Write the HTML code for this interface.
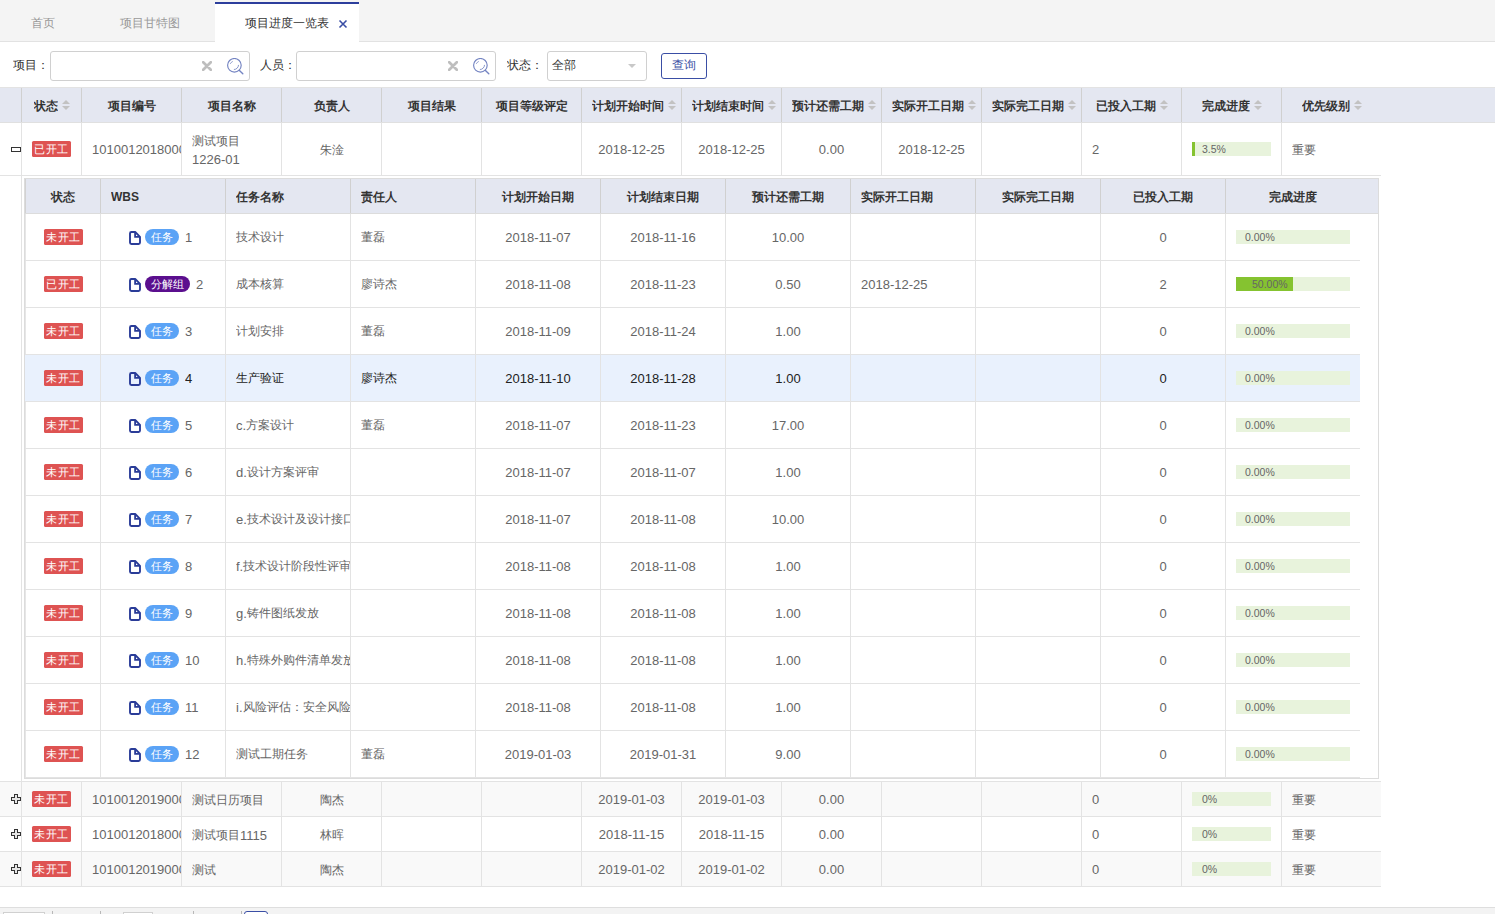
<!DOCTYPE html><html><head><meta charset="utf-8"><style>
*{box-sizing:border-box;margin:0;padding:0}
html,body{width:1495px;height:914px;overflow:hidden;background:#fff}
body{position:relative;font-family:"Liberation Sans",sans-serif;font-size:12px;color:#666}
.a{position:absolute}
.n{font-size:13px;position:relative;top:1px}
.t{position:absolute;white-space:nowrap;overflow:hidden;line-height:14px}
.hd{font-weight:bold;color:#333}
.badge{position:absolute;height:16px;background:#de5352;color:#fff;border-radius:1.5px;font-size:11px;letter-spacing:0.5px;line-height:16px;text-align:center;width:39px}
.vl{position:absolute;width:1px}
.hl{position:absolute;height:1px}
.sort{position:absolute;width:8px;height:10px}
.sort:before{content:"";position:absolute;left:0;top:0;border-left:4px solid transparent;border-right:4px solid transparent;border-bottom:4px solid #c2c2c2}
.sort:after{content:"";position:absolute;left:0;top:6px;border-left:4px solid transparent;border-right:4px solid transparent;border-top:4px solid #c2c2c2}
.prog{position:absolute;height:14px;background:#e8f3dc}
.pf{position:absolute;left:0;top:0;height:14px;background:#85c330}
.pt{position:absolute;top:0;line-height:14px;font-size:10.5px;color:#666;white-space:nowrap}
.pill{position:absolute;height:16px;border-radius:8px;color:#fff;font-size:11px;line-height:17px;text-align:center}
</style></head><body><div class="a" style="left:0px;top:0px;width:1495px;height:41px;background:#f4f4f4;"></div>
<div class="a" style="left:0px;top:41px;width:1495px;height:1px;background:#e2e2e2;"></div>
<div class="t " style="left:20px;top:14px;width:46px;height:18px;line-height:18px;text-align:center;color:#999;font-size:12px">首页</div>
<div class="t " style="left:110px;top:14px;width:80px;height:18px;line-height:18px;text-align:center;color:#999">项目甘特图</div>
<div class="a" style="left:215px;top:2px;width:144px;height:40px;background:#fff;"></div>
<div class="a" style="left:215px;top:2px;width:144px;height:2px;background:#2c3e9c;"></div>
<div class="t " style="left:235px;top:14px;width:100px;height:18px;line-height:18px;text-align:left;color:#333;left:245px">项目进度一览表</div>
<svg class="a" style="left:338px;top:19px" width="10" height="10" viewBox="0 0 10 10"><path d="M1.5 1.5L8.5 8.5M8.5 1.5L1.5 8.5" stroke="#3a4ea5" stroke-width="1.6"/></svg>
<div class="t " style="left:13px;top:58px;width:40px;height:14px;line-height:14px;text-align:left;color:#333">项目：</div>
<div class="a" style="left:50px;top:51px;width:200px;height:30px;border:1px solid #d0d0d0;border-radius:3px;background:#fff"></div>
<svg class="a" style="left:202px;top:61px" width="10" height="10" viewBox="0 0 10 10"><path d="M1.2 1.2L8.8 8.8M8.8 1.2L1.2 8.8" stroke="#bebebe" stroke-width="2.7" stroke-linecap="round"/></svg>
<svg class="a" style="left:227px;top:58px" width="18" height="18" viewBox="0 0 18 18"><circle cx="7.4" cy="7.3" r="6.8" fill="none" stroke="#7484c2" stroke-width="1.15"/><path d="M12.2 12.2L15.8 15.7" stroke="#7484c2" stroke-width="1.4" stroke-linecap="round"/><path d="M3.4 5.5A4.3 4.3 0 0 1 5.4 3.6" fill="none" stroke="#7484c2" stroke-width="0.8" stroke-linecap="round"/><path d="M11.5 7.3A4.2 4.2 0 0 1 7.3 11.5" fill="none" stroke="#7484c2" stroke-width="0.85" stroke-linecap="round"/></svg>
<div class="t " style="left:260px;top:58px;width:40px;height:14px;line-height:14px;text-align:left;color:#333">人员：</div>
<div class="a" style="left:296px;top:51px;width:200px;height:30px;border:1px solid #d0d0d0;border-radius:3px;background:#fff"></div>
<svg class="a" style="left:448px;top:61px" width="10" height="10" viewBox="0 0 10 10"><path d="M1.2 1.2L8.8 8.8M8.8 1.2L1.2 8.8" stroke="#bebebe" stroke-width="2.7" stroke-linecap="round"/></svg>
<svg class="a" style="left:473px;top:58px" width="18" height="18" viewBox="0 0 18 18"><circle cx="7.4" cy="7.3" r="6.8" fill="none" stroke="#7484c2" stroke-width="1.15"/><path d="M12.2 12.2L15.8 15.7" stroke="#7484c2" stroke-width="1.4" stroke-linecap="round"/><path d="M3.4 5.5A4.3 4.3 0 0 1 5.4 3.6" fill="none" stroke="#7484c2" stroke-width="0.8" stroke-linecap="round"/><path d="M11.5 7.3A4.2 4.2 0 0 1 7.3 11.5" fill="none" stroke="#7484c2" stroke-width="0.85" stroke-linecap="round"/></svg>
<div class="t " style="left:507px;top:58px;width:40px;height:14px;line-height:14px;text-align:left;color:#333">状态：</div>
<div class="a" style="left:547px;top:51px;width:100px;height:30px;border:1px solid #d0d0d0;border-radius:3px;background:#fff"></div>
<div class="t " style="left:552px;top:58px;width:40px;height:14px;line-height:14px;text-align:left;color:#333">全部</div>
<div class="a" style="left:628px;top:64px;border-left:4.5px solid transparent;border-right:4.5px solid transparent;border-top:4.5px solid #c8c8c8"></div>
<div class="a" style="left:661px;top:53px;width:46px;height:26px;border:1px solid #3a4ea5;border-radius:3px;background:#fff"></div>
<div class="t " style="left:661px;top:58px;width:46px;height:14px;line-height:14px;text-align:center;color:#3a4ea5">查询</div>
<div class="a" style="left:0px;top:87px;width:1495px;height:1px;background:#e3e3e3;"></div>
<div class="a" style="left:0px;top:88px;width:1495px;height:34px;background:#e4e7f1;"></div>
<div class="a" style="left:0px;top:122px;width:1495px;height:1px;background:#e0e0e0;"></div>
<div class="a" style="left:21px;top:88px;width:1px;height:34px;background:#d0d0d0;"></div>
<div class="a" style="left:81px;top:88px;width:1px;height:34px;background:#d0d0d0;"></div>
<div class="a" style="left:181px;top:88px;width:1px;height:34px;background:#d0d0d0;"></div>
<div class="a" style="left:281px;top:88px;width:1px;height:34px;background:#d0d0d0;"></div>
<div class="a" style="left:381px;top:88px;width:1px;height:34px;background:#d0d0d0;"></div>
<div class="a" style="left:481px;top:88px;width:1px;height:34px;background:#d0d0d0;"></div>
<div class="a" style="left:581px;top:88px;width:1px;height:34px;background:#d0d0d0;"></div>
<div class="a" style="left:681px;top:88px;width:1px;height:34px;background:#d0d0d0;"></div>
<div class="a" style="left:781px;top:88px;width:1px;height:34px;background:#d0d0d0;"></div>
<div class="a" style="left:881px;top:88px;width:1px;height:34px;background:#d0d0d0;"></div>
<div class="a" style="left:981px;top:88px;width:1px;height:34px;background:#d0d0d0;"></div>
<div class="a" style="left:1081px;top:88px;width:1px;height:34px;background:#d0d0d0;"></div>
<div class="a" style="left:1181px;top:88px;width:1px;height:34px;background:#d0d0d0;"></div>
<div class="a" style="left:1281px;top:88px;width:1px;height:34px;background:#d0d0d0;"></div>
<div class="t hd" style="left:34px;top:89px;width:24px;height:34px;line-height:34px;text-align:left;">状态</div>
<div class="sort" style="left:62px;top:100px"></div>
<div class="t hd" style="left:82px;top:89px;width:99px;height:34px;line-height:34px;text-align:center;">项目编号</div>
<div class="t hd" style="left:182px;top:89px;width:99px;height:34px;line-height:34px;text-align:center;">项目名称</div>
<div class="t hd" style="left:282px;top:89px;width:99px;height:34px;line-height:34px;text-align:center;">负责人</div>
<div class="t hd" style="left:382px;top:89px;width:99px;height:34px;line-height:34px;text-align:center;">项目结果</div>
<div class="t hd" style="left:482px;top:89px;width:99px;height:34px;line-height:34px;text-align:center;">项目等级评定</div>
<div class="t hd" style="left:592px;top:89px;width:72px;height:34px;line-height:34px;text-align:left;">计划开始时间</div>
<div class="sort" style="left:668px;top:100px"></div>
<div class="t hd" style="left:692px;top:89px;width:72px;height:34px;line-height:34px;text-align:left;">计划结束时间</div>
<div class="sort" style="left:768px;top:100px"></div>
<div class="t hd" style="left:792px;top:89px;width:72px;height:34px;line-height:34px;text-align:left;">预计还需工期</div>
<div class="sort" style="left:868px;top:100px"></div>
<div class="t hd" style="left:892px;top:89px;width:72px;height:34px;line-height:34px;text-align:left;">实际开工日期</div>
<div class="sort" style="left:968px;top:100px"></div>
<div class="t hd" style="left:992px;top:89px;width:72px;height:34px;line-height:34px;text-align:left;">实际完工日期</div>
<div class="sort" style="left:1068px;top:100px"></div>
<div class="t hd" style="left:1096px;top:89px;width:60px;height:34px;line-height:34px;text-align:left;">已投入工期</div>
<div class="sort" style="left:1160px;top:100px"></div>
<div class="t hd" style="left:1202px;top:89px;width:48px;height:34px;line-height:34px;text-align:left;">完成进度</div>
<div class="sort" style="left:1254px;top:100px"></div>
<div class="t hd" style="left:1302px;top:89px;width:48px;height:34px;line-height:34px;text-align:left;">优先级别</div>
<div class="sort" style="left:1354px;top:100px"></div>
<div class="a" style="left:0px;top:123px;width:1381px;height:52px;background:#fff;"></div>
<div class="a" style="left:0px;top:175px;width:1381px;height:1px;background:#e3e3e3;"></div>
<div class="a" style="left:21px;top:123px;width:1px;height:52px;background:#e3e3e3;"></div>
<div class="a" style="left:81px;top:123px;width:1px;height:52px;background:#e3e3e3;"></div>
<div class="a" style="left:181px;top:123px;width:1px;height:52px;background:#e3e3e3;"></div>
<div class="a" style="left:281px;top:123px;width:1px;height:52px;background:#e3e3e3;"></div>
<div class="a" style="left:381px;top:123px;width:1px;height:52px;background:#e3e3e3;"></div>
<div class="a" style="left:481px;top:123px;width:1px;height:52px;background:#e3e3e3;"></div>
<div class="a" style="left:581px;top:123px;width:1px;height:52px;background:#e3e3e3;"></div>
<div class="a" style="left:681px;top:123px;width:1px;height:52px;background:#e3e3e3;"></div>
<div class="a" style="left:781px;top:123px;width:1px;height:52px;background:#e3e3e3;"></div>
<div class="a" style="left:881px;top:123px;width:1px;height:52px;background:#e3e3e3;"></div>
<div class="a" style="left:981px;top:123px;width:1px;height:52px;background:#e3e3e3;"></div>
<div class="a" style="left:1081px;top:123px;width:1px;height:52px;background:#e3e3e3;"></div>
<div class="a" style="left:1181px;top:123px;width:1px;height:52px;background:#e3e3e3;"></div>
<div class="a" style="left:1281px;top:123px;width:1px;height:52px;background:#e3e3e3;"></div>
<svg class="a" style="left:11px;top:147px" width="11" height="5" viewBox="0 0 11 5" shape-rendering="crispEdges"><rect x="0.5" y="0.5" width="9" height="4" fill="#fff" stroke="#333" stroke-width="1"/></svg>
<div class="badge" style="left:32px;top:141px">已开工</div>
<div class="t " style="left:92px;top:123px;width:89px;height:52px;line-height:52px;text-align:left;"><span class="n">1010012018000</span></div>
<div class="t " style="left:192px;top:124px;width:89px;height:52px;line-height:52px;text-align:left;"><div style="line-height:18px;padding-top:8px">测试项目<br><span class="n">1226-01</span></div></div>
<div class="t " style="left:282px;top:124px;width:99px;height:52px;line-height:52px;text-align:center;">朱淦</div>
<div class="t " style="left:582px;top:123px;width:99px;height:52px;line-height:52px;text-align:center;"><span class="n">2018-12-25</span></div>
<div class="t " style="left:682px;top:123px;width:99px;height:52px;line-height:52px;text-align:center;"><span class="n">2018-12-25</span></div>
<div class="t " style="left:782px;top:123px;width:99px;height:52px;line-height:52px;text-align:center;"><span class="n">0.00</span></div>
<div class="t " style="left:882px;top:123px;width:99px;height:52px;line-height:52px;text-align:center;"><span class="n">2018-12-25</span></div>
<div class="t " style="left:1092px;top:123px;width:89px;height:52px;line-height:52px;text-align:left;"><span class="n">2</span></div>
<div class="prog" style="left:1192px;top:142px;width:79px"><div class="pf" style="width:3px"></div><div class="pt" style="left:10px">3.5%</div></div>
<div class="t " style="left:1292px;top:124px;width:89px;height:52px;line-height:52px;text-align:left;">重要</div>
<div class="a" style="left:21px;top:176px;width:1px;height:605px;background:#e3e3e3;"></div>
<div class="a" style="left:24px;top:178px;width:1355px;height:601px;background:#fff;border:1px solid #dcdcdc"></div>
<div class="a" style="left:25px;top:179px;width:1353px;height:34px;background:#e4e7f1;"></div>
<div class="a" style="left:25px;top:179px;width:1px;height:34px;background:#d2d2d2;"></div>
<div class="a" style="left:25px;top:214px;width:1px;height:564px;background:#e6e6e6;"></div>
<div class="a" style="left:25px;top:213px;width:1353px;height:1px;background:#dcdcdc;"></div>
<div class="a" style="left:100px;top:179px;width:1px;height:34px;background:#d0d0d0;"></div>
<div class="a" style="left:225px;top:179px;width:1px;height:34px;background:#d0d0d0;"></div>
<div class="a" style="left:350px;top:179px;width:1px;height:34px;background:#d0d0d0;"></div>
<div class="a" style="left:475px;top:179px;width:1px;height:34px;background:#d0d0d0;"></div>
<div class="a" style="left:600px;top:179px;width:1px;height:34px;background:#d0d0d0;"></div>
<div class="a" style="left:725px;top:179px;width:1px;height:34px;background:#d0d0d0;"></div>
<div class="a" style="left:850px;top:179px;width:1px;height:34px;background:#d0d0d0;"></div>
<div class="a" style="left:975px;top:179px;width:1px;height:34px;background:#d0d0d0;"></div>
<div class="a" style="left:1100px;top:179px;width:1px;height:34px;background:#d0d0d0;"></div>
<div class="a" style="left:1225px;top:179px;width:1px;height:34px;background:#d0d0d0;"></div>
<div class="t hd" style="left:26px;top:180px;width:74px;height:34px;line-height:34px;text-align:center;">状态</div>
<div class="t hd" style="left:111px;top:180px;width:114px;height:34px;line-height:34px;text-align:left;">WBS</div>
<div class="t hd" style="left:236px;top:180px;width:114px;height:34px;line-height:34px;text-align:left;">任务名称</div>
<div class="t hd" style="left:361px;top:180px;width:114px;height:34px;line-height:34px;text-align:left;">责任人</div>
<div class="t hd" style="left:476px;top:180px;width:124px;height:34px;line-height:34px;text-align:center;">计划开始日期</div>
<div class="t hd" style="left:601px;top:180px;width:124px;height:34px;line-height:34px;text-align:center;">计划结束日期</div>
<div class="t hd" style="left:726px;top:180px;width:124px;height:34px;line-height:34px;text-align:center;">预计还需工期</div>
<div class="t hd" style="left:861px;top:180px;width:114px;height:34px;line-height:34px;text-align:left;">实际开工日期</div>
<div class="t hd" style="left:976px;top:180px;width:124px;height:34px;line-height:34px;text-align:center;">实际完工日期</div>
<div class="t hd" style="left:1101px;top:180px;width:124px;height:34px;line-height:34px;text-align:center;">已投入工期</div>
<div class="t hd" style="left:1226px;top:180px;width:134px;height:34px;line-height:34px;text-align:center;">完成进度</div>
<div class="a" style="left:25px;top:260px;width:1335px;height:1px;background:#e3e3e3;"></div>
<div class="a" style="left:100px;top:214px;width:1px;height:46px;background:#e3e3e3;"></div>
<div class="a" style="left:225px;top:214px;width:1px;height:46px;background:#e3e3e3;"></div>
<div class="a" style="left:350px;top:214px;width:1px;height:46px;background:#e3e3e3;"></div>
<div class="a" style="left:475px;top:214px;width:1px;height:46px;background:#e3e3e3;"></div>
<div class="a" style="left:600px;top:214px;width:1px;height:46px;background:#e3e3e3;"></div>
<div class="a" style="left:725px;top:214px;width:1px;height:46px;background:#e3e3e3;"></div>
<div class="a" style="left:850px;top:214px;width:1px;height:46px;background:#e3e3e3;"></div>
<div class="a" style="left:975px;top:214px;width:1px;height:46px;background:#e3e3e3;"></div>
<div class="a" style="left:1100px;top:214px;width:1px;height:46px;background:#e3e3e3;"></div>
<div class="a" style="left:1225px;top:214px;width:1px;height:46px;background:#e3e3e3;"></div>
<div class="badge" style="left:44px;top:229px">未开工</div>
<svg class="a" style="left:128px;top:230px" width="14" height="16" viewBox="0 0 14 16"><path d="M2 3.4Q2 2 3.4 2H7.2L12 6.8V12.6Q12 14 10.6 14H3.4Q2 14 2 12.6Z" fill="none" stroke="#2a3c98" stroke-width="1.9" stroke-linejoin="round"/><path d="M7.1 2.2V6.9H11.8" fill="none" stroke="#2a3c98" stroke-width="1.8"/></svg>
<div class="pill" style="left:145px;top:229px;width:34px;background:#5ba3f6">任务</div>
<div class="t " style="left:185px;top:214px;width:30px;height:46px;line-height:46px;text-align:left;color:#666"><span class="n">1</span></div>
<div class="t " style="left:236px;top:214px;width:114px;height:46px;line-height:46px;text-align:left;color:#666">技术设计</div>
<div class="t " style="left:361px;top:214px;width:114px;height:46px;line-height:46px;text-align:left;color:#666">董磊</div>
<div class="t " style="left:476px;top:214px;width:124px;height:46px;line-height:46px;text-align:center;color:#666"><span class="n">2018-11-07</span></div>
<div class="t " style="left:601px;top:214px;width:124px;height:46px;line-height:46px;text-align:center;color:#666"><span class="n">2018-11-16</span></div>
<div class="t " style="left:726px;top:214px;width:124px;height:46px;line-height:46px;text-align:center;color:#666"><span class="n">10.00</span></div>
<div class="t " style="left:861px;top:214px;width:114px;height:46px;line-height:46px;text-align:left;color:#666"></div>
<div class="t " style="left:1101px;top:214px;width:124px;height:46px;line-height:46px;text-align:center;color:#666"><span class="n">0</span></div>
<div class="prog" style="left:1236px;top:230px;width:114px"><div class="pf" style="width:0px"></div><div class="pt" style="left:9px">0.00%</div></div>
<div class="a" style="left:25px;top:307px;width:1335px;height:1px;background:#e3e3e3;"></div>
<div class="a" style="left:100px;top:261px;width:1px;height:46px;background:#e3e3e3;"></div>
<div class="a" style="left:225px;top:261px;width:1px;height:46px;background:#e3e3e3;"></div>
<div class="a" style="left:350px;top:261px;width:1px;height:46px;background:#e3e3e3;"></div>
<div class="a" style="left:475px;top:261px;width:1px;height:46px;background:#e3e3e3;"></div>
<div class="a" style="left:600px;top:261px;width:1px;height:46px;background:#e3e3e3;"></div>
<div class="a" style="left:725px;top:261px;width:1px;height:46px;background:#e3e3e3;"></div>
<div class="a" style="left:850px;top:261px;width:1px;height:46px;background:#e3e3e3;"></div>
<div class="a" style="left:975px;top:261px;width:1px;height:46px;background:#e3e3e3;"></div>
<div class="a" style="left:1100px;top:261px;width:1px;height:46px;background:#e3e3e3;"></div>
<div class="a" style="left:1225px;top:261px;width:1px;height:46px;background:#e3e3e3;"></div>
<div class="badge" style="left:44px;top:276px">已开工</div>
<svg class="a" style="left:128px;top:277px" width="14" height="16" viewBox="0 0 14 16"><path d="M2 3.4Q2 2 3.4 2H7.2L12 6.8V12.6Q12 14 10.6 14H3.4Q2 14 2 12.6Z" fill="none" stroke="#2a3c98" stroke-width="1.9" stroke-linejoin="round"/><path d="M7.1 2.2V6.9H11.8" fill="none" stroke="#2a3c98" stroke-width="1.8"/></svg>
<div class="pill" style="left:145px;top:276px;width:45px;background:#5b0f8e">分解组</div>
<div class="t " style="left:196px;top:261px;width:30px;height:46px;line-height:46px;text-align:left;color:#666"><span class="n">2</span></div>
<div class="t " style="left:236px;top:261px;width:114px;height:46px;line-height:46px;text-align:left;color:#666">成本核算</div>
<div class="t " style="left:361px;top:261px;width:114px;height:46px;line-height:46px;text-align:left;color:#666">廖诗杰</div>
<div class="t " style="left:476px;top:261px;width:124px;height:46px;line-height:46px;text-align:center;color:#666"><span class="n">2018-11-08</span></div>
<div class="t " style="left:601px;top:261px;width:124px;height:46px;line-height:46px;text-align:center;color:#666"><span class="n">2018-11-23</span></div>
<div class="t " style="left:726px;top:261px;width:124px;height:46px;line-height:46px;text-align:center;color:#666"><span class="n">0.50</span></div>
<div class="t " style="left:861px;top:261px;width:114px;height:46px;line-height:46px;text-align:left;color:#666"><span class="n">2018-12-25</span></div>
<div class="t " style="left:1101px;top:261px;width:124px;height:46px;line-height:46px;text-align:center;color:#666"><span class="n">2</span></div>
<div class="prog" style="left:1236px;top:277px;width:114px"><div class="pf" style="width:57px"></div><div class="pt" style="left:16px">50.00%</div></div>
<div class="a" style="left:25px;top:354px;width:1335px;height:1px;background:#e3e3e3;"></div>
<div class="a" style="left:100px;top:308px;width:1px;height:46px;background:#e3e3e3;"></div>
<div class="a" style="left:225px;top:308px;width:1px;height:46px;background:#e3e3e3;"></div>
<div class="a" style="left:350px;top:308px;width:1px;height:46px;background:#e3e3e3;"></div>
<div class="a" style="left:475px;top:308px;width:1px;height:46px;background:#e3e3e3;"></div>
<div class="a" style="left:600px;top:308px;width:1px;height:46px;background:#e3e3e3;"></div>
<div class="a" style="left:725px;top:308px;width:1px;height:46px;background:#e3e3e3;"></div>
<div class="a" style="left:850px;top:308px;width:1px;height:46px;background:#e3e3e3;"></div>
<div class="a" style="left:975px;top:308px;width:1px;height:46px;background:#e3e3e3;"></div>
<div class="a" style="left:1100px;top:308px;width:1px;height:46px;background:#e3e3e3;"></div>
<div class="a" style="left:1225px;top:308px;width:1px;height:46px;background:#e3e3e3;"></div>
<div class="badge" style="left:44px;top:323px">未开工</div>
<svg class="a" style="left:128px;top:324px" width="14" height="16" viewBox="0 0 14 16"><path d="M2 3.4Q2 2 3.4 2H7.2L12 6.8V12.6Q12 14 10.6 14H3.4Q2 14 2 12.6Z" fill="none" stroke="#2a3c98" stroke-width="1.9" stroke-linejoin="round"/><path d="M7.1 2.2V6.9H11.8" fill="none" stroke="#2a3c98" stroke-width="1.8"/></svg>
<div class="pill" style="left:145px;top:323px;width:34px;background:#5ba3f6">任务</div>
<div class="t " style="left:185px;top:308px;width:30px;height:46px;line-height:46px;text-align:left;color:#666"><span class="n">3</span></div>
<div class="t " style="left:236px;top:308px;width:114px;height:46px;line-height:46px;text-align:left;color:#666">计划安排</div>
<div class="t " style="left:361px;top:308px;width:114px;height:46px;line-height:46px;text-align:left;color:#666">董磊</div>
<div class="t " style="left:476px;top:308px;width:124px;height:46px;line-height:46px;text-align:center;color:#666"><span class="n">2018-11-09</span></div>
<div class="t " style="left:601px;top:308px;width:124px;height:46px;line-height:46px;text-align:center;color:#666"><span class="n">2018-11-24</span></div>
<div class="t " style="left:726px;top:308px;width:124px;height:46px;line-height:46px;text-align:center;color:#666"><span class="n">1.00</span></div>
<div class="t " style="left:861px;top:308px;width:114px;height:46px;line-height:46px;text-align:left;color:#666"></div>
<div class="t " style="left:1101px;top:308px;width:124px;height:46px;line-height:46px;text-align:center;color:#666"><span class="n">0</span></div>
<div class="prog" style="left:1236px;top:324px;width:114px"><div class="pf" style="width:0px"></div><div class="pt" style="left:9px">0.00%</div></div>
<div class="a" style="left:25px;top:355px;width:1335px;height:46px;background:#e9f1fd;"></div>
<div class="a" style="left:25px;top:401px;width:1335px;height:1px;background:#e3e3e3;"></div>
<div class="a" style="left:100px;top:355px;width:1px;height:46px;background:#e3e3e3;"></div>
<div class="a" style="left:225px;top:355px;width:1px;height:46px;background:#e3e3e3;"></div>
<div class="a" style="left:350px;top:355px;width:1px;height:46px;background:#e3e3e3;"></div>
<div class="a" style="left:475px;top:355px;width:1px;height:46px;background:#e3e3e3;"></div>
<div class="a" style="left:600px;top:355px;width:1px;height:46px;background:#e3e3e3;"></div>
<div class="a" style="left:725px;top:355px;width:1px;height:46px;background:#e3e3e3;"></div>
<div class="a" style="left:850px;top:355px;width:1px;height:46px;background:#e3e3e3;"></div>
<div class="a" style="left:975px;top:355px;width:1px;height:46px;background:#e3e3e3;"></div>
<div class="a" style="left:1100px;top:355px;width:1px;height:46px;background:#e3e3e3;"></div>
<div class="a" style="left:1225px;top:355px;width:1px;height:46px;background:#e3e3e3;"></div>
<div class="badge" style="left:44px;top:370px">未开工</div>
<svg class="a" style="left:128px;top:371px" width="14" height="16" viewBox="0 0 14 16"><path d="M2 3.4Q2 2 3.4 2H7.2L12 6.8V12.6Q12 14 10.6 14H3.4Q2 14 2 12.6Z" fill="none" stroke="#2a3c98" stroke-width="1.9" stroke-linejoin="round"/><path d="M7.1 2.2V6.9H11.8" fill="none" stroke="#2a3c98" stroke-width="1.8"/></svg>
<div class="pill" style="left:145px;top:370px;width:34px;background:#5ba3f6">任务</div>
<div class="t " style="left:185px;top:355px;width:30px;height:46px;line-height:46px;text-align:left;color:#222"><span class="n">4</span></div>
<div class="t " style="left:236px;top:355px;width:114px;height:46px;line-height:46px;text-align:left;color:#222">生产验证</div>
<div class="t " style="left:361px;top:355px;width:114px;height:46px;line-height:46px;text-align:left;color:#222">廖诗杰</div>
<div class="t " style="left:476px;top:355px;width:124px;height:46px;line-height:46px;text-align:center;color:#222"><span class="n">2018-11-10</span></div>
<div class="t " style="left:601px;top:355px;width:124px;height:46px;line-height:46px;text-align:center;color:#222"><span class="n">2018-11-28</span></div>
<div class="t " style="left:726px;top:355px;width:124px;height:46px;line-height:46px;text-align:center;color:#222"><span class="n">1.00</span></div>
<div class="t " style="left:861px;top:355px;width:114px;height:46px;line-height:46px;text-align:left;color:#222"></div>
<div class="t " style="left:1101px;top:355px;width:124px;height:46px;line-height:46px;text-align:center;color:#222"><span class="n">0</span></div>
<div class="prog" style="left:1236px;top:371px;width:114px"><div class="pf" style="width:0px"></div><div class="pt" style="left:9px">0.00%</div></div>
<div class="a" style="left:25px;top:448px;width:1335px;height:1px;background:#e3e3e3;"></div>
<div class="a" style="left:100px;top:402px;width:1px;height:46px;background:#e3e3e3;"></div>
<div class="a" style="left:225px;top:402px;width:1px;height:46px;background:#e3e3e3;"></div>
<div class="a" style="left:350px;top:402px;width:1px;height:46px;background:#e3e3e3;"></div>
<div class="a" style="left:475px;top:402px;width:1px;height:46px;background:#e3e3e3;"></div>
<div class="a" style="left:600px;top:402px;width:1px;height:46px;background:#e3e3e3;"></div>
<div class="a" style="left:725px;top:402px;width:1px;height:46px;background:#e3e3e3;"></div>
<div class="a" style="left:850px;top:402px;width:1px;height:46px;background:#e3e3e3;"></div>
<div class="a" style="left:975px;top:402px;width:1px;height:46px;background:#e3e3e3;"></div>
<div class="a" style="left:1100px;top:402px;width:1px;height:46px;background:#e3e3e3;"></div>
<div class="a" style="left:1225px;top:402px;width:1px;height:46px;background:#e3e3e3;"></div>
<div class="badge" style="left:44px;top:417px">未开工</div>
<svg class="a" style="left:128px;top:418px" width="14" height="16" viewBox="0 0 14 16"><path d="M2 3.4Q2 2 3.4 2H7.2L12 6.8V12.6Q12 14 10.6 14H3.4Q2 14 2 12.6Z" fill="none" stroke="#2a3c98" stroke-width="1.9" stroke-linejoin="round"/><path d="M7.1 2.2V6.9H11.8" fill="none" stroke="#2a3c98" stroke-width="1.8"/></svg>
<div class="pill" style="left:145px;top:417px;width:34px;background:#5ba3f6">任务</div>
<div class="t " style="left:185px;top:402px;width:30px;height:46px;line-height:46px;text-align:left;color:#666"><span class="n">5</span></div>
<div class="t " style="left:236px;top:402px;width:114px;height:46px;line-height:46px;text-align:left;color:#666"><span class="n">c.</span>方案设计</div>
<div class="t " style="left:361px;top:402px;width:114px;height:46px;line-height:46px;text-align:left;color:#666">董磊</div>
<div class="t " style="left:476px;top:402px;width:124px;height:46px;line-height:46px;text-align:center;color:#666"><span class="n">2018-11-07</span></div>
<div class="t " style="left:601px;top:402px;width:124px;height:46px;line-height:46px;text-align:center;color:#666"><span class="n">2018-11-23</span></div>
<div class="t " style="left:726px;top:402px;width:124px;height:46px;line-height:46px;text-align:center;color:#666"><span class="n">17.00</span></div>
<div class="t " style="left:861px;top:402px;width:114px;height:46px;line-height:46px;text-align:left;color:#666"></div>
<div class="t " style="left:1101px;top:402px;width:124px;height:46px;line-height:46px;text-align:center;color:#666"><span class="n">0</span></div>
<div class="prog" style="left:1236px;top:418px;width:114px"><div class="pf" style="width:0px"></div><div class="pt" style="left:9px">0.00%</div></div>
<div class="a" style="left:25px;top:495px;width:1335px;height:1px;background:#e3e3e3;"></div>
<div class="a" style="left:100px;top:449px;width:1px;height:46px;background:#e3e3e3;"></div>
<div class="a" style="left:225px;top:449px;width:1px;height:46px;background:#e3e3e3;"></div>
<div class="a" style="left:350px;top:449px;width:1px;height:46px;background:#e3e3e3;"></div>
<div class="a" style="left:475px;top:449px;width:1px;height:46px;background:#e3e3e3;"></div>
<div class="a" style="left:600px;top:449px;width:1px;height:46px;background:#e3e3e3;"></div>
<div class="a" style="left:725px;top:449px;width:1px;height:46px;background:#e3e3e3;"></div>
<div class="a" style="left:850px;top:449px;width:1px;height:46px;background:#e3e3e3;"></div>
<div class="a" style="left:975px;top:449px;width:1px;height:46px;background:#e3e3e3;"></div>
<div class="a" style="left:1100px;top:449px;width:1px;height:46px;background:#e3e3e3;"></div>
<div class="a" style="left:1225px;top:449px;width:1px;height:46px;background:#e3e3e3;"></div>
<div class="badge" style="left:44px;top:464px">未开工</div>
<svg class="a" style="left:128px;top:465px" width="14" height="16" viewBox="0 0 14 16"><path d="M2 3.4Q2 2 3.4 2H7.2L12 6.8V12.6Q12 14 10.6 14H3.4Q2 14 2 12.6Z" fill="none" stroke="#2a3c98" stroke-width="1.9" stroke-linejoin="round"/><path d="M7.1 2.2V6.9H11.8" fill="none" stroke="#2a3c98" stroke-width="1.8"/></svg>
<div class="pill" style="left:145px;top:464px;width:34px;background:#5ba3f6">任务</div>
<div class="t " style="left:185px;top:449px;width:30px;height:46px;line-height:46px;text-align:left;color:#666"><span class="n">6</span></div>
<div class="t " style="left:236px;top:449px;width:114px;height:46px;line-height:46px;text-align:left;color:#666"><span class="n">d.</span>设计方案评审</div>
<div class="t " style="left:361px;top:449px;width:114px;height:46px;line-height:46px;text-align:left;color:#666"></div>
<div class="t " style="left:476px;top:449px;width:124px;height:46px;line-height:46px;text-align:center;color:#666"><span class="n">2018-11-07</span></div>
<div class="t " style="left:601px;top:449px;width:124px;height:46px;line-height:46px;text-align:center;color:#666"><span class="n">2018-11-07</span></div>
<div class="t " style="left:726px;top:449px;width:124px;height:46px;line-height:46px;text-align:center;color:#666"><span class="n">1.00</span></div>
<div class="t " style="left:861px;top:449px;width:114px;height:46px;line-height:46px;text-align:left;color:#666"></div>
<div class="t " style="left:1101px;top:449px;width:124px;height:46px;line-height:46px;text-align:center;color:#666"><span class="n">0</span></div>
<div class="prog" style="left:1236px;top:465px;width:114px"><div class="pf" style="width:0px"></div><div class="pt" style="left:9px">0.00%</div></div>
<div class="a" style="left:25px;top:542px;width:1335px;height:1px;background:#e3e3e3;"></div>
<div class="a" style="left:100px;top:496px;width:1px;height:46px;background:#e3e3e3;"></div>
<div class="a" style="left:225px;top:496px;width:1px;height:46px;background:#e3e3e3;"></div>
<div class="a" style="left:350px;top:496px;width:1px;height:46px;background:#e3e3e3;"></div>
<div class="a" style="left:475px;top:496px;width:1px;height:46px;background:#e3e3e3;"></div>
<div class="a" style="left:600px;top:496px;width:1px;height:46px;background:#e3e3e3;"></div>
<div class="a" style="left:725px;top:496px;width:1px;height:46px;background:#e3e3e3;"></div>
<div class="a" style="left:850px;top:496px;width:1px;height:46px;background:#e3e3e3;"></div>
<div class="a" style="left:975px;top:496px;width:1px;height:46px;background:#e3e3e3;"></div>
<div class="a" style="left:1100px;top:496px;width:1px;height:46px;background:#e3e3e3;"></div>
<div class="a" style="left:1225px;top:496px;width:1px;height:46px;background:#e3e3e3;"></div>
<div class="badge" style="left:44px;top:511px">未开工</div>
<svg class="a" style="left:128px;top:512px" width="14" height="16" viewBox="0 0 14 16"><path d="M2 3.4Q2 2 3.4 2H7.2L12 6.8V12.6Q12 14 10.6 14H3.4Q2 14 2 12.6Z" fill="none" stroke="#2a3c98" stroke-width="1.9" stroke-linejoin="round"/><path d="M7.1 2.2V6.9H11.8" fill="none" stroke="#2a3c98" stroke-width="1.8"/></svg>
<div class="pill" style="left:145px;top:511px;width:34px;background:#5ba3f6">任务</div>
<div class="t " style="left:185px;top:496px;width:30px;height:46px;line-height:46px;text-align:left;color:#666"><span class="n">7</span></div>
<div class="t " style="left:236px;top:496px;width:114px;height:46px;line-height:46px;text-align:left;color:#666"><span class="n">e.</span>技术设计及设计接口</div>
<div class="t " style="left:361px;top:496px;width:114px;height:46px;line-height:46px;text-align:left;color:#666"></div>
<div class="t " style="left:476px;top:496px;width:124px;height:46px;line-height:46px;text-align:center;color:#666"><span class="n">2018-11-07</span></div>
<div class="t " style="left:601px;top:496px;width:124px;height:46px;line-height:46px;text-align:center;color:#666"><span class="n">2018-11-08</span></div>
<div class="t " style="left:726px;top:496px;width:124px;height:46px;line-height:46px;text-align:center;color:#666"><span class="n">10.00</span></div>
<div class="t " style="left:861px;top:496px;width:114px;height:46px;line-height:46px;text-align:left;color:#666"></div>
<div class="t " style="left:1101px;top:496px;width:124px;height:46px;line-height:46px;text-align:center;color:#666"><span class="n">0</span></div>
<div class="prog" style="left:1236px;top:512px;width:114px"><div class="pf" style="width:0px"></div><div class="pt" style="left:9px">0.00%</div></div>
<div class="a" style="left:25px;top:589px;width:1335px;height:1px;background:#e3e3e3;"></div>
<div class="a" style="left:100px;top:543px;width:1px;height:46px;background:#e3e3e3;"></div>
<div class="a" style="left:225px;top:543px;width:1px;height:46px;background:#e3e3e3;"></div>
<div class="a" style="left:350px;top:543px;width:1px;height:46px;background:#e3e3e3;"></div>
<div class="a" style="left:475px;top:543px;width:1px;height:46px;background:#e3e3e3;"></div>
<div class="a" style="left:600px;top:543px;width:1px;height:46px;background:#e3e3e3;"></div>
<div class="a" style="left:725px;top:543px;width:1px;height:46px;background:#e3e3e3;"></div>
<div class="a" style="left:850px;top:543px;width:1px;height:46px;background:#e3e3e3;"></div>
<div class="a" style="left:975px;top:543px;width:1px;height:46px;background:#e3e3e3;"></div>
<div class="a" style="left:1100px;top:543px;width:1px;height:46px;background:#e3e3e3;"></div>
<div class="a" style="left:1225px;top:543px;width:1px;height:46px;background:#e3e3e3;"></div>
<div class="badge" style="left:44px;top:558px">未开工</div>
<svg class="a" style="left:128px;top:559px" width="14" height="16" viewBox="0 0 14 16"><path d="M2 3.4Q2 2 3.4 2H7.2L12 6.8V12.6Q12 14 10.6 14H3.4Q2 14 2 12.6Z" fill="none" stroke="#2a3c98" stroke-width="1.9" stroke-linejoin="round"/><path d="M7.1 2.2V6.9H11.8" fill="none" stroke="#2a3c98" stroke-width="1.8"/></svg>
<div class="pill" style="left:145px;top:558px;width:34px;background:#5ba3f6">任务</div>
<div class="t " style="left:185px;top:543px;width:30px;height:46px;line-height:46px;text-align:left;color:#666"><span class="n">8</span></div>
<div class="t " style="left:236px;top:543px;width:114px;height:46px;line-height:46px;text-align:left;color:#666"><span class="n">f.</span>技术设计阶段性评审</div>
<div class="t " style="left:361px;top:543px;width:114px;height:46px;line-height:46px;text-align:left;color:#666"></div>
<div class="t " style="left:476px;top:543px;width:124px;height:46px;line-height:46px;text-align:center;color:#666"><span class="n">2018-11-08</span></div>
<div class="t " style="left:601px;top:543px;width:124px;height:46px;line-height:46px;text-align:center;color:#666"><span class="n">2018-11-08</span></div>
<div class="t " style="left:726px;top:543px;width:124px;height:46px;line-height:46px;text-align:center;color:#666"><span class="n">1.00</span></div>
<div class="t " style="left:861px;top:543px;width:114px;height:46px;line-height:46px;text-align:left;color:#666"></div>
<div class="t " style="left:1101px;top:543px;width:124px;height:46px;line-height:46px;text-align:center;color:#666"><span class="n">0</span></div>
<div class="prog" style="left:1236px;top:559px;width:114px"><div class="pf" style="width:0px"></div><div class="pt" style="left:9px">0.00%</div></div>
<div class="a" style="left:25px;top:636px;width:1335px;height:1px;background:#e3e3e3;"></div>
<div class="a" style="left:100px;top:590px;width:1px;height:46px;background:#e3e3e3;"></div>
<div class="a" style="left:225px;top:590px;width:1px;height:46px;background:#e3e3e3;"></div>
<div class="a" style="left:350px;top:590px;width:1px;height:46px;background:#e3e3e3;"></div>
<div class="a" style="left:475px;top:590px;width:1px;height:46px;background:#e3e3e3;"></div>
<div class="a" style="left:600px;top:590px;width:1px;height:46px;background:#e3e3e3;"></div>
<div class="a" style="left:725px;top:590px;width:1px;height:46px;background:#e3e3e3;"></div>
<div class="a" style="left:850px;top:590px;width:1px;height:46px;background:#e3e3e3;"></div>
<div class="a" style="left:975px;top:590px;width:1px;height:46px;background:#e3e3e3;"></div>
<div class="a" style="left:1100px;top:590px;width:1px;height:46px;background:#e3e3e3;"></div>
<div class="a" style="left:1225px;top:590px;width:1px;height:46px;background:#e3e3e3;"></div>
<div class="badge" style="left:44px;top:605px">未开工</div>
<svg class="a" style="left:128px;top:606px" width="14" height="16" viewBox="0 0 14 16"><path d="M2 3.4Q2 2 3.4 2H7.2L12 6.8V12.6Q12 14 10.6 14H3.4Q2 14 2 12.6Z" fill="none" stroke="#2a3c98" stroke-width="1.9" stroke-linejoin="round"/><path d="M7.1 2.2V6.9H11.8" fill="none" stroke="#2a3c98" stroke-width="1.8"/></svg>
<div class="pill" style="left:145px;top:605px;width:34px;background:#5ba3f6">任务</div>
<div class="t " style="left:185px;top:590px;width:30px;height:46px;line-height:46px;text-align:left;color:#666"><span class="n">9</span></div>
<div class="t " style="left:236px;top:590px;width:114px;height:46px;line-height:46px;text-align:left;color:#666"><span class="n">g.</span>铸件图纸发放</div>
<div class="t " style="left:361px;top:590px;width:114px;height:46px;line-height:46px;text-align:left;color:#666"></div>
<div class="t " style="left:476px;top:590px;width:124px;height:46px;line-height:46px;text-align:center;color:#666"><span class="n">2018-11-08</span></div>
<div class="t " style="left:601px;top:590px;width:124px;height:46px;line-height:46px;text-align:center;color:#666"><span class="n">2018-11-08</span></div>
<div class="t " style="left:726px;top:590px;width:124px;height:46px;line-height:46px;text-align:center;color:#666"><span class="n">1.00</span></div>
<div class="t " style="left:861px;top:590px;width:114px;height:46px;line-height:46px;text-align:left;color:#666"></div>
<div class="t " style="left:1101px;top:590px;width:124px;height:46px;line-height:46px;text-align:center;color:#666"><span class="n">0</span></div>
<div class="prog" style="left:1236px;top:606px;width:114px"><div class="pf" style="width:0px"></div><div class="pt" style="left:9px">0.00%</div></div>
<div class="a" style="left:25px;top:683px;width:1335px;height:1px;background:#e3e3e3;"></div>
<div class="a" style="left:100px;top:637px;width:1px;height:46px;background:#e3e3e3;"></div>
<div class="a" style="left:225px;top:637px;width:1px;height:46px;background:#e3e3e3;"></div>
<div class="a" style="left:350px;top:637px;width:1px;height:46px;background:#e3e3e3;"></div>
<div class="a" style="left:475px;top:637px;width:1px;height:46px;background:#e3e3e3;"></div>
<div class="a" style="left:600px;top:637px;width:1px;height:46px;background:#e3e3e3;"></div>
<div class="a" style="left:725px;top:637px;width:1px;height:46px;background:#e3e3e3;"></div>
<div class="a" style="left:850px;top:637px;width:1px;height:46px;background:#e3e3e3;"></div>
<div class="a" style="left:975px;top:637px;width:1px;height:46px;background:#e3e3e3;"></div>
<div class="a" style="left:1100px;top:637px;width:1px;height:46px;background:#e3e3e3;"></div>
<div class="a" style="left:1225px;top:637px;width:1px;height:46px;background:#e3e3e3;"></div>
<div class="badge" style="left:44px;top:652px">未开工</div>
<svg class="a" style="left:128px;top:653px" width="14" height="16" viewBox="0 0 14 16"><path d="M2 3.4Q2 2 3.4 2H7.2L12 6.8V12.6Q12 14 10.6 14H3.4Q2 14 2 12.6Z" fill="none" stroke="#2a3c98" stroke-width="1.9" stroke-linejoin="round"/><path d="M7.1 2.2V6.9H11.8" fill="none" stroke="#2a3c98" stroke-width="1.8"/></svg>
<div class="pill" style="left:145px;top:652px;width:34px;background:#5ba3f6">任务</div>
<div class="t " style="left:185px;top:637px;width:30px;height:46px;line-height:46px;text-align:left;color:#666"><span class="n">10</span></div>
<div class="t " style="left:236px;top:637px;width:114px;height:46px;line-height:46px;text-align:left;color:#666"><span class="n">h.</span>特殊外购件清单发放</div>
<div class="t " style="left:361px;top:637px;width:114px;height:46px;line-height:46px;text-align:left;color:#666"></div>
<div class="t " style="left:476px;top:637px;width:124px;height:46px;line-height:46px;text-align:center;color:#666"><span class="n">2018-11-08</span></div>
<div class="t " style="left:601px;top:637px;width:124px;height:46px;line-height:46px;text-align:center;color:#666"><span class="n">2018-11-08</span></div>
<div class="t " style="left:726px;top:637px;width:124px;height:46px;line-height:46px;text-align:center;color:#666"><span class="n">1.00</span></div>
<div class="t " style="left:861px;top:637px;width:114px;height:46px;line-height:46px;text-align:left;color:#666"></div>
<div class="t " style="left:1101px;top:637px;width:124px;height:46px;line-height:46px;text-align:center;color:#666"><span class="n">0</span></div>
<div class="prog" style="left:1236px;top:653px;width:114px"><div class="pf" style="width:0px"></div><div class="pt" style="left:9px">0.00%</div></div>
<div class="a" style="left:25px;top:730px;width:1335px;height:1px;background:#e3e3e3;"></div>
<div class="a" style="left:100px;top:684px;width:1px;height:46px;background:#e3e3e3;"></div>
<div class="a" style="left:225px;top:684px;width:1px;height:46px;background:#e3e3e3;"></div>
<div class="a" style="left:350px;top:684px;width:1px;height:46px;background:#e3e3e3;"></div>
<div class="a" style="left:475px;top:684px;width:1px;height:46px;background:#e3e3e3;"></div>
<div class="a" style="left:600px;top:684px;width:1px;height:46px;background:#e3e3e3;"></div>
<div class="a" style="left:725px;top:684px;width:1px;height:46px;background:#e3e3e3;"></div>
<div class="a" style="left:850px;top:684px;width:1px;height:46px;background:#e3e3e3;"></div>
<div class="a" style="left:975px;top:684px;width:1px;height:46px;background:#e3e3e3;"></div>
<div class="a" style="left:1100px;top:684px;width:1px;height:46px;background:#e3e3e3;"></div>
<div class="a" style="left:1225px;top:684px;width:1px;height:46px;background:#e3e3e3;"></div>
<div class="badge" style="left:44px;top:699px">未开工</div>
<svg class="a" style="left:128px;top:700px" width="14" height="16" viewBox="0 0 14 16"><path d="M2 3.4Q2 2 3.4 2H7.2L12 6.8V12.6Q12 14 10.6 14H3.4Q2 14 2 12.6Z" fill="none" stroke="#2a3c98" stroke-width="1.9" stroke-linejoin="round"/><path d="M7.1 2.2V6.9H11.8" fill="none" stroke="#2a3c98" stroke-width="1.8"/></svg>
<div class="pill" style="left:145px;top:699px;width:34px;background:#5ba3f6">任务</div>
<div class="t " style="left:185px;top:684px;width:30px;height:46px;line-height:46px;text-align:left;color:#666"><span class="n">11</span></div>
<div class="t " style="left:236px;top:684px;width:114px;height:46px;line-height:46px;text-align:left;color:#666"><span class="n">i.</span>风险评估：安全风险</div>
<div class="t " style="left:361px;top:684px;width:114px;height:46px;line-height:46px;text-align:left;color:#666"></div>
<div class="t " style="left:476px;top:684px;width:124px;height:46px;line-height:46px;text-align:center;color:#666"><span class="n">2018-11-08</span></div>
<div class="t " style="left:601px;top:684px;width:124px;height:46px;line-height:46px;text-align:center;color:#666"><span class="n">2018-11-08</span></div>
<div class="t " style="left:726px;top:684px;width:124px;height:46px;line-height:46px;text-align:center;color:#666"><span class="n">1.00</span></div>
<div class="t " style="left:861px;top:684px;width:114px;height:46px;line-height:46px;text-align:left;color:#666"></div>
<div class="t " style="left:1101px;top:684px;width:124px;height:46px;line-height:46px;text-align:center;color:#666"><span class="n">0</span></div>
<div class="prog" style="left:1236px;top:700px;width:114px"><div class="pf" style="width:0px"></div><div class="pt" style="left:9px">0.00%</div></div>
<div class="a" style="left:25px;top:777px;width:1335px;height:1px;background:#e3e3e3;"></div>
<div class="a" style="left:100px;top:731px;width:1px;height:46px;background:#e3e3e3;"></div>
<div class="a" style="left:225px;top:731px;width:1px;height:46px;background:#e3e3e3;"></div>
<div class="a" style="left:350px;top:731px;width:1px;height:46px;background:#e3e3e3;"></div>
<div class="a" style="left:475px;top:731px;width:1px;height:46px;background:#e3e3e3;"></div>
<div class="a" style="left:600px;top:731px;width:1px;height:46px;background:#e3e3e3;"></div>
<div class="a" style="left:725px;top:731px;width:1px;height:46px;background:#e3e3e3;"></div>
<div class="a" style="left:850px;top:731px;width:1px;height:46px;background:#e3e3e3;"></div>
<div class="a" style="left:975px;top:731px;width:1px;height:46px;background:#e3e3e3;"></div>
<div class="a" style="left:1100px;top:731px;width:1px;height:46px;background:#e3e3e3;"></div>
<div class="a" style="left:1225px;top:731px;width:1px;height:46px;background:#e3e3e3;"></div>
<div class="badge" style="left:44px;top:746px">未开工</div>
<svg class="a" style="left:128px;top:747px" width="14" height="16" viewBox="0 0 14 16"><path d="M2 3.4Q2 2 3.4 2H7.2L12 6.8V12.6Q12 14 10.6 14H3.4Q2 14 2 12.6Z" fill="none" stroke="#2a3c98" stroke-width="1.9" stroke-linejoin="round"/><path d="M7.1 2.2V6.9H11.8" fill="none" stroke="#2a3c98" stroke-width="1.8"/></svg>
<div class="pill" style="left:145px;top:746px;width:34px;background:#5ba3f6">任务</div>
<div class="t " style="left:185px;top:731px;width:30px;height:46px;line-height:46px;text-align:left;color:#666"><span class="n">12</span></div>
<div class="t " style="left:236px;top:731px;width:114px;height:46px;line-height:46px;text-align:left;color:#666">测试工期任务</div>
<div class="t " style="left:361px;top:731px;width:114px;height:46px;line-height:46px;text-align:left;color:#666">董磊</div>
<div class="t " style="left:476px;top:731px;width:124px;height:46px;line-height:46px;text-align:center;color:#666"><span class="n">2019-01-03</span></div>
<div class="t " style="left:601px;top:731px;width:124px;height:46px;line-height:46px;text-align:center;color:#666"><span class="n">2019-01-31</span></div>
<div class="t " style="left:726px;top:731px;width:124px;height:46px;line-height:46px;text-align:center;color:#666"><span class="n">9.00</span></div>
<div class="t " style="left:861px;top:731px;width:114px;height:46px;line-height:46px;text-align:left;color:#666"></div>
<div class="t " style="left:1101px;top:731px;width:124px;height:46px;line-height:46px;text-align:center;color:#666"><span class="n">0</span></div>
<div class="prog" style="left:1236px;top:747px;width:114px"><div class="pf" style="width:0px"></div><div class="pt" style="left:9px">0.00%</div></div>
<div class="a" style="left:0px;top:781px;width:1381px;height:1px;background:#e3e3e3;"></div>
<div class="a" style="left:0px;top:782px;width:1381px;height:34px;background:#f9f9f9;"></div>
<div class="a" style="left:0px;top:816px;width:1381px;height:1px;background:#e3e3e3;"></div>
<div class="a" style="left:21px;top:782px;width:1px;height:34px;background:#e3e3e3;"></div>
<div class="a" style="left:81px;top:782px;width:1px;height:34px;background:#e3e3e3;"></div>
<div class="a" style="left:181px;top:782px;width:1px;height:34px;background:#e3e3e3;"></div>
<div class="a" style="left:281px;top:782px;width:1px;height:34px;background:#e3e3e3;"></div>
<div class="a" style="left:381px;top:782px;width:1px;height:34px;background:#e3e3e3;"></div>
<div class="a" style="left:481px;top:782px;width:1px;height:34px;background:#e3e3e3;"></div>
<div class="a" style="left:581px;top:782px;width:1px;height:34px;background:#e3e3e3;"></div>
<div class="a" style="left:681px;top:782px;width:1px;height:34px;background:#e3e3e3;"></div>
<div class="a" style="left:781px;top:782px;width:1px;height:34px;background:#e3e3e3;"></div>
<div class="a" style="left:881px;top:782px;width:1px;height:34px;background:#e3e3e3;"></div>
<div class="a" style="left:981px;top:782px;width:1px;height:34px;background:#e3e3e3;"></div>
<div class="a" style="left:1081px;top:782px;width:1px;height:34px;background:#e3e3e3;"></div>
<div class="a" style="left:1181px;top:782px;width:1px;height:34px;background:#e3e3e3;"></div>
<div class="a" style="left:1281px;top:782px;width:1px;height:34px;background:#e3e3e3;"></div>
<svg class="a" style="left:11px;top:794px" width="11" height="11" viewBox="0 0 11 11" shape-rendering="crispEdges"><path d="M3.5 0.5H6.5V3.5H9.5V6.5H6.5V9.5H3.5V6.5H0.5V3.5H3.5Z" fill="#e6e6e6" stroke="#333" stroke-width="1"/></svg>
<div class="badge" style="left:32px;top:791px">未开工</div>
<div class="t " style="left:92px;top:782px;width:89px;height:34px;line-height:34px;text-align:left;"><span class="n">1010012019000</span></div>
<div class="t " style="left:192px;top:783px;width:89px;height:34px;line-height:34px;text-align:left;"><span style="">测试日历项目</span></div>
<div class="t " style="left:282px;top:783px;width:99px;height:34px;line-height:34px;text-align:center;">陶杰</div>
<div class="t " style="left:582px;top:782px;width:99px;height:34px;line-height:34px;text-align:center;"><span class="n">2019-01-03</span></div>
<div class="t " style="left:682px;top:782px;width:99px;height:34px;line-height:34px;text-align:center;"><span class="n">2019-01-03</span></div>
<div class="t " style="left:782px;top:782px;width:99px;height:34px;line-height:34px;text-align:center;"><span class="n">0.00</span></div>
<div class="t " style="left:882px;top:782px;width:99px;height:34px;line-height:34px;text-align:center;"></div>
<div class="t " style="left:1092px;top:782px;width:89px;height:34px;line-height:34px;text-align:left;"><span class="n">0</span></div>
<div class="prog" style="left:1192px;top:792px;width:79px"><div class="pf" style="width:0px"></div><div class="pt" style="left:10px">0%</div></div>
<div class="t " style="left:1292px;top:783px;width:89px;height:34px;line-height:34px;text-align:left;">重要</div>
<div class="a" style="left:0px;top:817px;width:1381px;height:34px;background:#fff;"></div>
<div class="a" style="left:0px;top:851px;width:1381px;height:1px;background:#e3e3e3;"></div>
<div class="a" style="left:21px;top:817px;width:1px;height:34px;background:#e3e3e3;"></div>
<div class="a" style="left:81px;top:817px;width:1px;height:34px;background:#e3e3e3;"></div>
<div class="a" style="left:181px;top:817px;width:1px;height:34px;background:#e3e3e3;"></div>
<div class="a" style="left:281px;top:817px;width:1px;height:34px;background:#e3e3e3;"></div>
<div class="a" style="left:381px;top:817px;width:1px;height:34px;background:#e3e3e3;"></div>
<div class="a" style="left:481px;top:817px;width:1px;height:34px;background:#e3e3e3;"></div>
<div class="a" style="left:581px;top:817px;width:1px;height:34px;background:#e3e3e3;"></div>
<div class="a" style="left:681px;top:817px;width:1px;height:34px;background:#e3e3e3;"></div>
<div class="a" style="left:781px;top:817px;width:1px;height:34px;background:#e3e3e3;"></div>
<div class="a" style="left:881px;top:817px;width:1px;height:34px;background:#e3e3e3;"></div>
<div class="a" style="left:981px;top:817px;width:1px;height:34px;background:#e3e3e3;"></div>
<div class="a" style="left:1081px;top:817px;width:1px;height:34px;background:#e3e3e3;"></div>
<div class="a" style="left:1181px;top:817px;width:1px;height:34px;background:#e3e3e3;"></div>
<div class="a" style="left:1281px;top:817px;width:1px;height:34px;background:#e3e3e3;"></div>
<svg class="a" style="left:11px;top:829px" width="11" height="11" viewBox="0 0 11 11" shape-rendering="crispEdges"><path d="M3.5 0.5H6.5V3.5H9.5V6.5H6.5V9.5H3.5V6.5H0.5V3.5H3.5Z" fill="#e6e6e6" stroke="#333" stroke-width="1"/></svg>
<div class="badge" style="left:32px;top:826px">未开工</div>
<div class="t " style="left:92px;top:817px;width:89px;height:34px;line-height:34px;text-align:left;"><span class="n">1010012018000</span></div>
<div class="t " style="left:192px;top:818px;width:89px;height:34px;line-height:34px;text-align:left;">测试项目<span class="n">1115</span></div>
<div class="t " style="left:282px;top:818px;width:99px;height:34px;line-height:34px;text-align:center;">林晖</div>
<div class="t " style="left:582px;top:817px;width:99px;height:34px;line-height:34px;text-align:center;"><span class="n">2018-11-15</span></div>
<div class="t " style="left:682px;top:817px;width:99px;height:34px;line-height:34px;text-align:center;"><span class="n">2018-11-15</span></div>
<div class="t " style="left:782px;top:817px;width:99px;height:34px;line-height:34px;text-align:center;"><span class="n">0.00</span></div>
<div class="t " style="left:882px;top:817px;width:99px;height:34px;line-height:34px;text-align:center;"></div>
<div class="t " style="left:1092px;top:817px;width:89px;height:34px;line-height:34px;text-align:left;"><span class="n">0</span></div>
<div class="prog" style="left:1192px;top:827px;width:79px"><div class="pf" style="width:0px"></div><div class="pt" style="left:10px">0%</div></div>
<div class="t " style="left:1292px;top:818px;width:89px;height:34px;line-height:34px;text-align:left;">重要</div>
<div class="a" style="left:0px;top:852px;width:1381px;height:34px;background:#f9f9f9;"></div>
<div class="a" style="left:0px;top:886px;width:1381px;height:1px;background:#e3e3e3;"></div>
<div class="a" style="left:21px;top:852px;width:1px;height:34px;background:#e3e3e3;"></div>
<div class="a" style="left:81px;top:852px;width:1px;height:34px;background:#e3e3e3;"></div>
<div class="a" style="left:181px;top:852px;width:1px;height:34px;background:#e3e3e3;"></div>
<div class="a" style="left:281px;top:852px;width:1px;height:34px;background:#e3e3e3;"></div>
<div class="a" style="left:381px;top:852px;width:1px;height:34px;background:#e3e3e3;"></div>
<div class="a" style="left:481px;top:852px;width:1px;height:34px;background:#e3e3e3;"></div>
<div class="a" style="left:581px;top:852px;width:1px;height:34px;background:#e3e3e3;"></div>
<div class="a" style="left:681px;top:852px;width:1px;height:34px;background:#e3e3e3;"></div>
<div class="a" style="left:781px;top:852px;width:1px;height:34px;background:#e3e3e3;"></div>
<div class="a" style="left:881px;top:852px;width:1px;height:34px;background:#e3e3e3;"></div>
<div class="a" style="left:981px;top:852px;width:1px;height:34px;background:#e3e3e3;"></div>
<div class="a" style="left:1081px;top:852px;width:1px;height:34px;background:#e3e3e3;"></div>
<div class="a" style="left:1181px;top:852px;width:1px;height:34px;background:#e3e3e3;"></div>
<div class="a" style="left:1281px;top:852px;width:1px;height:34px;background:#e3e3e3;"></div>
<svg class="a" style="left:11px;top:864px" width="11" height="11" viewBox="0 0 11 11" shape-rendering="crispEdges"><path d="M3.5 0.5H6.5V3.5H9.5V6.5H6.5V9.5H3.5V6.5H0.5V3.5H3.5Z" fill="#e6e6e6" stroke="#333" stroke-width="1"/></svg>
<div class="badge" style="left:32px;top:861px">未开工</div>
<div class="t " style="left:92px;top:852px;width:89px;height:34px;line-height:34px;text-align:left;"><span class="n">1010012019000</span></div>
<div class="t " style="left:192px;top:853px;width:89px;height:34px;line-height:34px;text-align:left;">测试</div>
<div class="t " style="left:282px;top:853px;width:99px;height:34px;line-height:34px;text-align:center;">陶杰</div>
<div class="t " style="left:582px;top:852px;width:99px;height:34px;line-height:34px;text-align:center;"><span class="n">2019-01-02</span></div>
<div class="t " style="left:682px;top:852px;width:99px;height:34px;line-height:34px;text-align:center;"><span class="n">2019-01-02</span></div>
<div class="t " style="left:782px;top:852px;width:99px;height:34px;line-height:34px;text-align:center;"><span class="n">0.00</span></div>
<div class="t " style="left:882px;top:852px;width:99px;height:34px;line-height:34px;text-align:center;"></div>
<div class="t " style="left:1092px;top:852px;width:89px;height:34px;line-height:34px;text-align:left;"><span class="n">0</span></div>
<div class="prog" style="left:1192px;top:862px;width:79px"><div class="pf" style="width:0px"></div><div class="pt" style="left:10px">0%</div></div>
<div class="t " style="left:1292px;top:853px;width:89px;height:34px;line-height:34px;text-align:left;">重要</div>
<div class="a" style="left:0px;top:907px;width:1495px;height:1px;background:#dedede;"></div>
<div class="a" style="left:0px;top:908px;width:1495px;height:6px;background:#f3f3f3;"></div>
<div class="a" style="left:3px;top:912px;width:42px;height:10px;border:1px solid #d0d0d0;background:#fff"></div>
<div class="a" style="left:123px;top:912px;width:30px;height:10px;border:1px solid #d0d0d0;background:#fff"></div>
<div class="a" style="left:52px;top:911px;width:1px;height:3px;background:#b8b8b8;"></div>
<div class="a" style="left:100px;top:911px;width:1px;height:3px;background:#b8b8b8;"></div>
<div class="a" style="left:193px;top:911px;width:1px;height:3px;background:#b8b8b8;"></div>
<div class="a" style="left:241px;top:911px;width:1px;height:3px;background:#b8b8b8;"></div>
<div class="a" style="left:244px;top:911px;width:24px;height:10px;border:1px solid #3a4ea5;border-radius:3px;background:#fff"></div></body></html>
